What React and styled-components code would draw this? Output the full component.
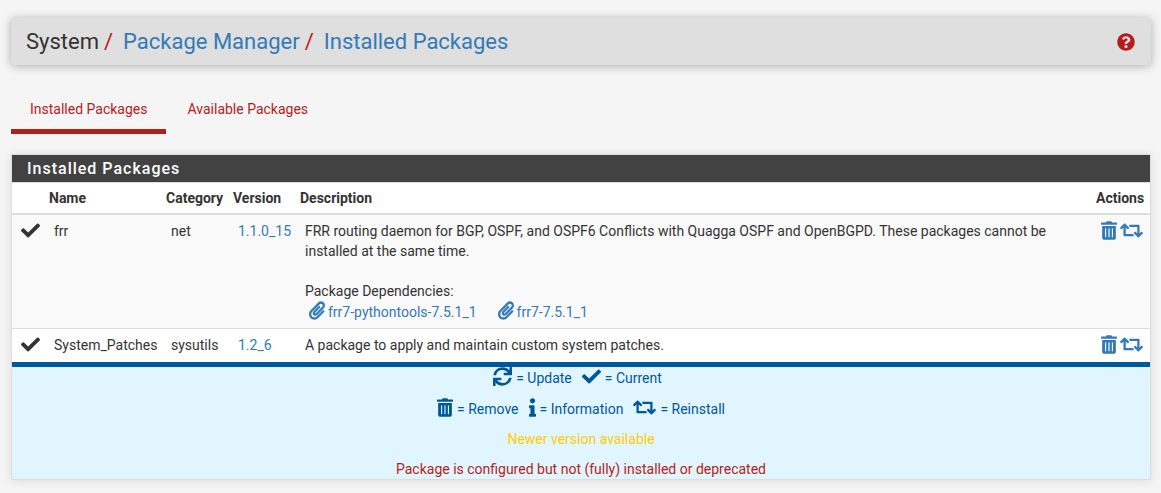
import React from "react";
import styled, { createGlobalStyle } from "styled-components";
import {
  FaCheck,
  FaInfo,
  FaPaperclip,
  FaQuestionCircle,
  FaRetweet,
  FaSync,
  FaTrashAlt,
} from "react-icons/fa";

const GlobalStyle = createGlobalStyle`
  *, *::before, *::after { box-sizing: border-box; }
  body {
    margin: 0;
    background: #f5f5f5;
    color: #333;
    font-family: Roboto, "Liberation Sans", sans-serif;
    font-size: 14px;
    line-height: 20px;
  }
  a { color: #337ab7; text-decoration: none; }
`;

const Page = styled.main`
  padding: 18px 10px 13px 11px;
`;

const Header = styled.header`
  display: flex;
  align-items: center;
  justify-content: space-between;
  height: 47px;
  padding: 0 16px 0 15px;
  border-radius: 4px;
  background: #dfdfdf;
  box-shadow: 0 1px 10px rgba(0, 0, 0, 0.3);
`;

const Breadcrumb = styled.ol`
  display: flex;
  margin: 0;
  padding: 0;
  list-style: none;
  font-size: 22px;
  line-height: 24px;
`;

const Crumb = styled.li`
  & + &::before {
    content: "/";
    padding: 0 10px 0 5px;
    color: #b71c1c;
  }
`;

const HelpLink = styled.a`
  display: flex;
  color: #b71c1c;
  font-size: 18px;
`;

const Tabs = styled.nav`
  display: flex;
  gap: 2px;
  margin: 20px 0;
`;

const Tab = styled.a`
  padding: 14px 19px 10px;
  border-bottom: 5px solid ${(p) => (p.$active ? "#b71c1c" : "transparent")};
  color: #b71c1c;
`;

const Panel = styled.section`
  border: 1px solid #ddd;
  background: #fff;
  box-shadow: 0 1px 10px rgba(0, 0, 0, 0.1);
`;

const PanelTitle = styled.h2`
  margin: 0;
  padding: 4px 15px 3px;
  border-bottom: 1px solid #ddd;
  background: #424242;
  color: #fff;
  font-size: 16px;
  font-weight: 500;
  letter-spacing: 1px;
  line-height: 20px;
`;

const PackageTable = styled.table`
  width: 100%;
  border-collapse: separate;
  border-spacing: 0;
  table-layout: fixed;
`;

const Col = styled.col`
  width: ${(p) => p.$width || "auto"};
`;

const HeadCell = styled.th`
  padding: 5px 4px;
  border-bottom: 2px solid #ddd;
  font-weight: 700;
  text-align: left;
  white-space: nowrap;
`;

const Row = styled.tr`
  &:nth-child(odd) { background: #f9f9f9; }
  & + & > td { border-top: 1px solid #ddd; }
`;

const Cell = styled.td`
  padding: 6px 0 6px 9px;
  vertical-align: top;
  white-space: ${(p) => (p.$wrap ? "normal" : "nowrap")};
`;

const Glyph = styled.span`
  display: flex;
  align-items: flex-start;
  height: 21px;

  svg {
    width: ${(p) => p.$width};
    height: 19px;
  }
`;

const Description = styled.p`
  margin: 0 0 20px;

  &:last-child { margin-bottom: 0; }
`;

const Actions = styled.div`
  display: flex;
  gap: 3px;
`;

const IconButton = styled.button`
  padding: 0;
  border: 0;
  background: none;
  color: #337ab7;
  cursor: pointer;
`;

const Dependencies = styled.div`
  display: flex;
  gap: 21px;
  padding-left: 4px;
`;

const Dependency = styled.a`
  display: flex;
  align-items: flex-end;
  gap: 3px;
`;

const Legend = styled.div`
  display: flex;
  flex-direction: column;
  gap: 10px;
  border-top: 5px solid #01579b;
  background: #e1f5fe;
  color: #01579b;
  text-align: center;
`;

const LegendLine = styled.p`
  margin: 0;
  color: ${(p) => p.$color};
`;

const LegendIcons = styled.div`
  display: flex;
  justify-content: center;
  gap: 10px;
  padding-right: ${(p) => p.$trail || "0"};
`;

const LegendItem = styled.span`
  display: flex;
  align-items: flex-end;
  gap: 4px;
`;

const icons = {
  current: { Shape: FaCheck, width: "19px" },
  update: { Shape: FaSync, width: "19px" },
  remove: { Shape: FaTrashAlt, width: "16px" },
  info: { Shape: FaInfo, width: "7px" },
  reinstall: { Shape: FaRetweet, width: "23px" },
  dependency: { Shape: FaPaperclip, width: "16px" },
};

const packages = [
  {
    name: "frr",
    category: "net",
    version: "1.1.0_15",
    description:
      "FRR routing daemon for BGP, OSPF, and OSPF6 Conflicts with Quagga OSPF and OpenBGPD. These packages cannot be installed at the same time.",
    dependencies: ["frr7-pythontools-7.5.1_1", "frr7-7.5.1_1"],
  },
  {
    name: "System_Patches",
    category: "sysutils",
    version: "1.2_6",
    description: "A package to apply and maintain custom system patches.",
    dependencies: [],
  },
];

function Icon({ name }) {
  const { Shape, width } = icons[name];
  return (
    <Glyph $width={width}>
      <Shape aria-hidden="true" />
    </Glyph>
  );
}

function PackageRow({ item }) {
  return (
    <Row>
      <Cell><Icon name="current" /></Cell>
      <Cell>{item.name}</Cell>
      <Cell>{item.category}</Cell>
      <Cell><a href="#changelog">{item.version}</a></Cell>
      <Cell $wrap>
        <Description>{item.description}</Description>
        {item.dependencies.length > 0 && (
          <>
            <div>Package Dependencies:</div>
            <Dependencies>
              {item.dependencies.map((name) => (
                <Dependency key={name} href={`#${name}`}>
                  <Icon name="dependency" />
                  {name}
                </Dependency>
              ))}
            </Dependencies>
          </>
        )}
      </Cell>
      <Cell>
        <Actions>
          <IconButton type="button" aria-label={`Remove ${item.name}`}>
            <Icon name="remove" />
          </IconButton>
          <IconButton type="button" aria-label={`Reinstall ${item.name}`}>
            <Icon name="reinstall" />
          </IconButton>
        </Actions>
      </Cell>
    </Row>
  );
}

function LegendEntry({ icon, label }) {
  return (
    <LegendItem>
      <Icon name={icon} />
      <span>= {label}</span>
    </LegendItem>
  );
}

export default function App() {
  return (
    <>
      <GlobalStyle />
      <Page>
        <Header>
          <Breadcrumb>
            <Crumb>System</Crumb>
            <Crumb><a href="#manager">Package Manager</a></Crumb>
            <Crumb><a href="#installed">Installed Packages</a></Crumb>
          </Breadcrumb>
          <HelpLink href="#help" aria-label="Help"><FaQuestionCircle /></HelpLink>
        </Header>
        <Tabs>
          <Tab href="#installed" $active>Installed Packages</Tab>
          <Tab href="#available">Available Packages</Tab>
        </Tabs>
        <Panel>
          <PanelTitle>Installed Packages</PanelTitle>
          <PackageTable>
            <colgroup>
              <Col $width="33px" />
              <Col $width="117px" />
              <Col $width="67px" />
              <Col $width="67px" />
              <Col />
              <Col $width="58px" />
            </colgroup>
            <thead>
              <tr>
                <HeadCell />
                <HeadCell>Name</HeadCell>
                <HeadCell>Category</HeadCell>
                <HeadCell>Version</HeadCell>
                <HeadCell>Description</HeadCell>
                <HeadCell>Actions</HeadCell>
              </tr>
            </thead>
            <tbody>
              {packages.map((item) => <PackageRow key={item.name} item={item} />)}
            </tbody>
          </PackageTable>
          <Legend>
            <LegendIcons $trail="7px">
              <LegendEntry icon="update" label="Update" />
              <LegendEntry icon="current" label="Current" />
            </LegendIcons>
            <LegendIcons>
              <LegendEntry icon="remove" label="Remove" />
              <LegendEntry icon="info" label="Information" />
              <LegendEntry icon="reinstall" label="Reinstall" />
            </LegendIcons>
            <LegendLine $color="#ffcc00">Newer version available</LegendLine>
            <LegendLine $color="#b71c1c">
              Package is configured but not (fully) installed or deprecated
            </LegendLine>
          </Legend>
        </Panel>
      </Page>
    </>
  );
}
